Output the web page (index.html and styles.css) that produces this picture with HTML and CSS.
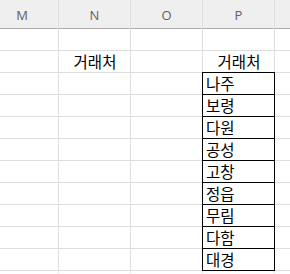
FILE: index.html
```html
<!DOCTYPE html>
<html lang="ko">
<head>
<meta charset="utf-8">
<link rel="stylesheet" href="styles.css">
</head>
<body>
<div class="sheet">
  <div class="col-head">M</div>
  <div class="col-head">N</div>
  <div class="col-head">O</div>
  <div class="col-head">P</div>
  <div class="col-head"></div>

  <div class="cell"></div><div class="cell"></div><div class="cell"></div><div class="cell"></div><div class="cell"></div>

  <div class="cell"></div><div class="cell center">거래처</div><div class="cell"></div><div class="cell center">거래처</div><div class="cell"></div>

  <div class="cell"></div><div class="cell"></div><div class="cell"></div><div class="cell boxed">나주</div><div class="cell"></div>
  <div class="cell"></div><div class="cell"></div><div class="cell"></div><div class="cell boxed">보령</div><div class="cell"></div>
  <div class="cell"></div><div class="cell"></div><div class="cell"></div><div class="cell boxed">다원</div><div class="cell"></div>
  <div class="cell"></div><div class="cell"></div><div class="cell"></div><div class="cell boxed">공성</div><div class="cell"></div>
  <div class="cell"></div><div class="cell"></div><div class="cell"></div><div class="cell boxed">고창</div><div class="cell"></div>
  <div class="cell"></div><div class="cell"></div><div class="cell"></div><div class="cell boxed">정읍</div><div class="cell"></div>
  <div class="cell"></div><div class="cell"></div><div class="cell"></div><div class="cell boxed">무림</div><div class="cell"></div>
  <div class="cell"></div><div class="cell"></div><div class="cell"></div><div class="cell boxed">다함</div><div class="cell"></div>
  <div class="cell"></div><div class="cell"></div><div class="cell"></div><div class="cell boxed">대경</div><div class="cell"></div>

  <div class="cell"></div><div class="cell"></div><div class="cell"></div><div class="cell"></div><div class="cell"></div>
</div>
</body>
</html>
```

FILE: styles.css
```css
html, body {
  margin: 0;
  padding: 0;
  background: #ffffff;
  overflow: hidden;
}

/* worksheet grid: 1px gaps show through as gridlines;
   column M starts scrolled partly out of view */
.sheet {
  display: grid;
  grid-template-columns: 72px 71px 71px 71px 1fr;
  grid-template-rows: 28px repeat(11, 21px) 2px;
  column-gap: 1px;
  row-gap: 1px;
  margin-left: -14px;
  width: calc(100% + 14px);
  background: #dedede;
  font-family: "Noto Sans CJK KR", "Noto Sans", sans-serif;
}

/* column letters, with a darker rule beneath */
.col-head {
  background: #efefef;
  color: #5f5f5f;
  font-family: "Open Sans", "Liberation Sans", sans-serif;
  font-size: 13px;
  line-height: 30px;
  text-align: center;
  box-shadow: 0 1px 0 #ababab;
  position: relative;
  z-index: 1;
}

.cell {
  background: #ffffff;
  color: #000000;
  font-size: 15.5px;
  line-height: 21px;
  padding: 0 2px 0 3px;
  display: flex;
  align-items: flex-end;
  white-space: nowrap;
  overflow: hidden;
}

.center {
  justify-content: center;
}

/* thin black border around the list */
.boxed {
  outline: 1px solid #000000;
  position: relative;
  z-index: 2;
  overflow: visible;
}
```
